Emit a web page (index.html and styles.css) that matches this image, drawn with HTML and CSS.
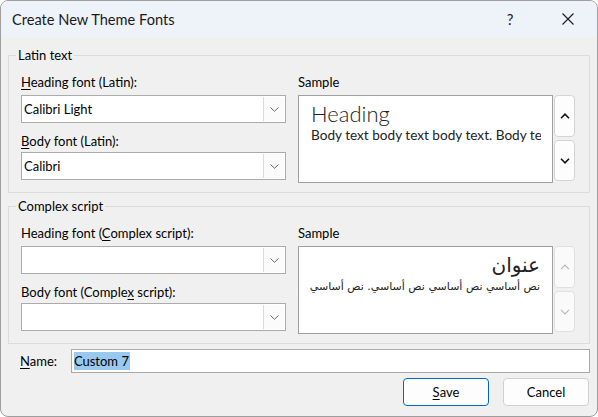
FILE: index.html
```html
<!DOCTYPE html>
<html lang="en">
<head>
<meta charset="utf-8">
<title>Create New Theme Fonts</title>
<link rel="stylesheet" href="styles.css">
</head>
<body>
<div class="window">
  <div class="titlebar">
    <span class="title">Create New Theme Fonts</span>
    <span class="help">?</span>
    <span class="close">
      <svg width="12" height="12" viewBox="0 0 12 12"><path d="M0.5 0.5 L11.5 11.5 M11.5 0.5 L0.5 11.5" stroke="#1a1a1a" stroke-width="1.1" fill="none"/></svg>
    </span>
  </div>
  <div class="content">
    <fieldset class="group">
      <legend>Latin text</legend>
      <div class="group-body">
        <div class="fields">
          <div class="label"><u>H</u>eading font (Latin):</div>
          <div class="combo"><span class="combo-text">Calibri Light</span><span class="combo-btn"><svg width="9" height="5" viewBox="0 0 9 5"><path d="M0.5 0.5 L4.5 4.3 L8.5 0.5" stroke="#666" stroke-width="1" fill="none"/></svg></span></div>
          <div class="label second"><u>B</u>ody font (Latin):</div>
          <div class="combo"><span class="combo-text">Calibri</span><span class="combo-btn"><svg width="9" height="5" viewBox="0 0 9 5"><path d="M0.5 0.5 L4.5 4.3 L8.5 0.5" stroke="#666" stroke-width="1" fill="none"/></svg></span></div>
        </div>
        <div class="sample-col">
          <div class="label">Sample</div>
          <div class="sample-row">
            <div class="sample">
              <div class="sample-heading">Heading</div>
              <div class="sample-body">Body text body text body text. Body text</div>
            </div>
            <div class="spin">
              <span class="spin-btn up"><svg width="10" height="6" viewBox="0 0 10 6"><path d="M1 5.2 L5 1.2 L9 5.2" stroke="#111" stroke-width="1.6" fill="none"/></svg></span>
              <span class="spin-btn down"><svg width="10" height="6" viewBox="0 0 10 6"><path d="M1 0.8 L5 4.8 L9 0.8" stroke="#111" stroke-width="1.6" fill="none"/></svg></span>
            </div>
          </div>
        </div>
      </div>
    </fieldset>

    <fieldset class="group group-complex">
      <legend>Complex script</legend>
      <div class="group-body">
        <div class="fields">
          <div class="label">Heading font (<u>C</u>omplex script):</div>
          <div class="combo"><span class="combo-text"></span><span class="combo-btn"><svg width="9" height="5" viewBox="0 0 9 5"><path d="M0.5 0.5 L4.5 4.3 L8.5 0.5" stroke="#666" stroke-width="1" fill="none"/></svg></span></div>
          <div class="label second">Body font (Comple<u>x</u> script):</div>
          <div class="combo"><span class="combo-text"></span><span class="combo-btn"><svg width="9" height="5" viewBox="0 0 9 5"><path d="M0.5 0.5 L4.5 4.3 L8.5 0.5" stroke="#666" stroke-width="1" fill="none"/></svg></span></div>
        </div>
        <div class="sample-col">
          <div class="label">Sample</div>
          <div class="sample-row">
            <div class="sample rtl" dir="rtl">
              <div class="sample-heading-ar">عنوان</div>
              <div class="sample-body-ar">نص أساسي نص أساسي نص أساسي. نص أساسي</div>
            </div>
            <div class="spin disabled">
              <span class="spin-btn up"><svg width="10" height="6" viewBox="0 0 10 6"><path d="M1 5.2 L5 1.2 L9 5.2" stroke="#b8b8b8" stroke-width="1.2" fill="none"/></svg></span>
              <span class="spin-btn down"><svg width="10" height="6" viewBox="0 0 10 6"><path d="M1 0.8 L5 4.8 L9 0.8" stroke="#b8b8b8" stroke-width="1.2" fill="none"/></svg></span>
            </div>
          </div>
        </div>
      </div>
    </fieldset>

    <div class="name-row">
      <span class="name-label"><u>N</u>ame:</span>
      <div class="name-input"><span class="selected">Custom 7</span></div>
    </div>

    <div class="buttons">
      <span class="btn primary"><u>S</u>ave</span>
      <span class="btn">Cancel</span>
    </div>
  </div>
</div>
</body>
</html>
```

FILE: styles.css
```css
html, body {
  margin: 0;
  padding: 0;
  background: #ffffff;
}

body {
  font-family: "Lato", "Noto Sans", sans-serif;
  font-size: 13px;
  color: #000;
}

u {
  text-decoration: underline;
  text-underline-offset: 2px;
}

.window {
  box-sizing: border-box;
  width: 598px;
  height: 417px;
  border: 1px solid #9e9e9e;
  border-radius: 8px;
  overflow: hidden;
  background: #f0f0f0;
  display: flex;
  flex-direction: column;
}

.titlebar {
  flex: none;
  height: 36px;
  background: #eef2f9;
  display: flex;
  align-items: center;
  padding-left: 11px;
}

.title {
  flex: 1;
  font-size: 14.6px;
  color: #1a1a1a;
}

.help {
  width: 20px;
  text-align: center;
  font-size: 15px;
  color: #1a1a1a;
  margin-right: 38px;
}

.close {
  width: 20px;
  height: 12px;
  display: flex;
  justify-content: center;
  margin-right: 19px;
}

.content {
  flex: 1;
  padding: 10px 7px 0 7px;
  display: flex;
  flex-direction: column;
}

.group {
  margin: 0;
  padding: 0;
  border: 1px solid #dcdcdc;
  min-width: 0;
}

.group-complex {
  margin-top: 5px;
}

.group legend {
  margin-left: 7px;
  padding: 0 2px;
  line-height: 16px;
  color: #000;
}

.group-body {
  display: flex;
  padding: 11px 13px 9px 12px;
}

.fields {
  width: 265px;
  display: flex;
  flex-direction: column;
}

.label {
  line-height: 16px;
  height: 16px;
  margin-bottom: 5px;
  white-space: nowrap;
}

.label.second {
  margin-top: 10px;
  margin-bottom: 3px;
}

.combo {
  box-sizing: border-box;
  height: 28px;
  border: 1px solid #ababab;
  background: #fff;
  display: flex;
  align-items: stretch;
}

.combo-text {
  flex: 1;
  padding-left: 2px;
  display: flex;
  align-items: center;
}

.combo-btn {
  box-sizing: border-box;
  width: 21px;
  margin: 1px;
  border-left: 1px solid #dadada;
  background: #fbfbfb;
  display: flex;
  align-items: center;
  justify-content: center;
}

.sample-col {
  margin-left: 12px;
  display: flex;
  flex-direction: column;
}

.sample-row {
  display: flex;
  gap: 1px;
}

.sample {
  box-sizing: border-box;
  width: 255px;
  height: 88px;
  border: 1px solid #a0a0a0;
  background: #fff;
  padding: 4px 11px 0 12px;
  overflow: hidden;
  color: #222;
}

.sample-heading {
  font-family: "Lato", sans-serif;
  font-weight: 300;
  font-size: 22px;
  line-height: 27px;
  white-space: nowrap;
}

.sample-body {
  font-family: "Lato", sans-serif;
  font-size: 13.6px;
  line-height: 16px;
  white-space: nowrap;
  overflow: hidden;
}

.sample.rtl {
  padding: 5px 12px 0 10px;
}

.sample-heading-ar {
  font-family: "DejaVu Sans", sans-serif;
  font-size: 20px;
  line-height: 26px;
  white-space: nowrap;
}

.sample-body-ar {
  font-family: "DejaVu Sans", sans-serif;
  font-size: 11px;
  line-height: 18px;
  white-space: nowrap;
  overflow: hidden;
}

.spin {
  width: 21px;
  display: flex;
  flex-direction: column;
  gap: 3px;
}

.spin-btn {
  box-sizing: border-box;
  border: 1px solid #d4d4d4;
  border-radius: 4px;
  background: #fdfdfd;
  display: flex;
  align-items: center;
  justify-content: center;
}

.spin-btn.up {
  height: 42px;
}

.spin-btn.down {
  height: 41px;
}

.spin.disabled .spin-btn {
  border-color: #e0e0e0;
  background: #fafafa;
}

.name-row {
  margin-top: 5px;
  display: flex;
  align-items: center;
}

.name-label {
  margin-left: 12px;
  width: 51px;
}

.name-input {
  box-sizing: border-box;
  width: 520px;
  height: 24px;
  border: 1px solid #a9a9a9;
  background: #fff;
  display: flex;
  align-items: center;
  padding-left: 2px;
}

.selected {
  background: #99c9ef;
  line-height: 18px;
  padding-right: 1px;
}

.buttons {
  margin-top: 5px;
  display: flex;
  justify-content: flex-end;
  gap: 14px;
  padding-right: 1px;
}

.btn {
  box-sizing: border-box;
  width: 86px;
  height: 28px;
  border: 1px solid #d0d0d0;
  border-radius: 4px;
  background: #fdfdfd;
  display: flex;
  align-items: center;
  justify-content: center;
}

.btn.primary {
  border-color: #0067c0;
}
```
